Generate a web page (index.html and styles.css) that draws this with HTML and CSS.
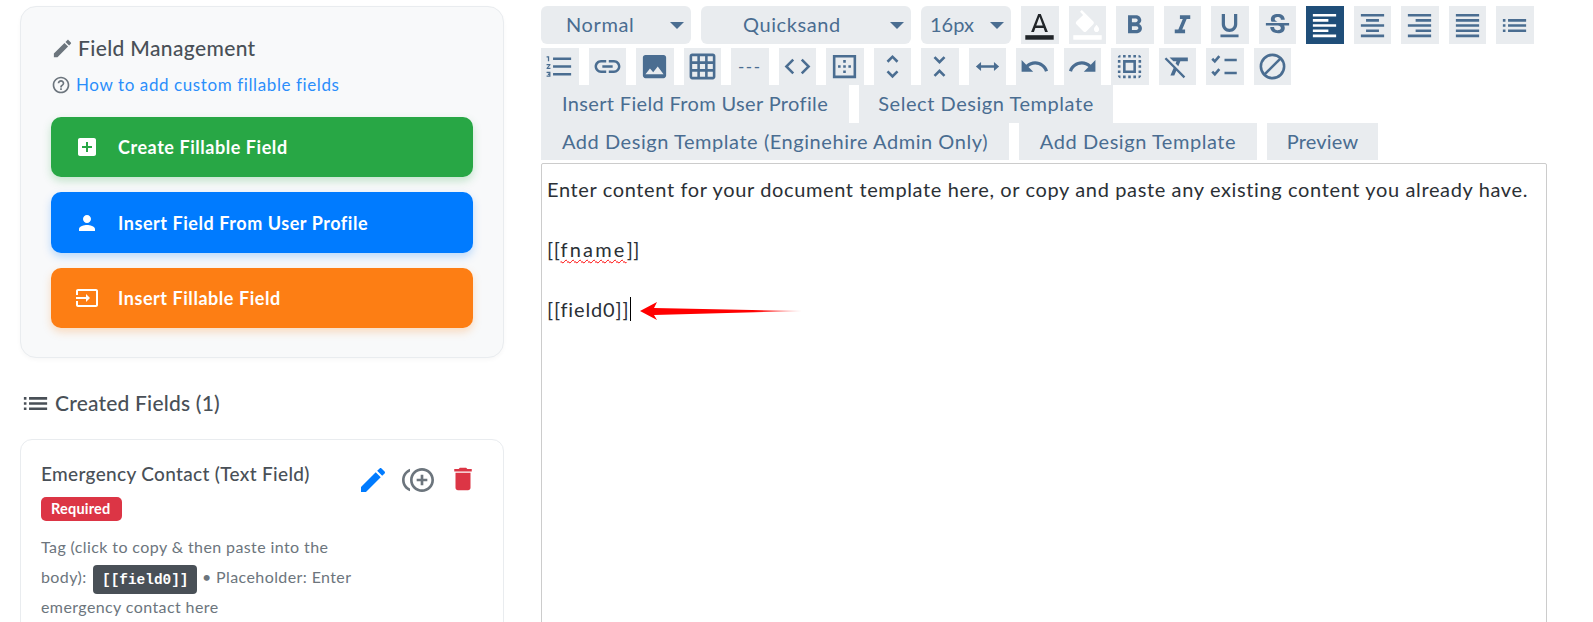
FILE: index.html
```html
<!DOCTYPE html>
<html lang="en">
<head>
<meta charset="utf-8">
<title>Document Template</title>
<link rel="stylesheet" href="styles.css">
</head>
<body>
<div class="page">
  <aside class="side">
    <section class="panel">
      <h2 class="panel-title"><svg class="ico-title" viewBox="0 0 24 24"><path d="M3 17.25V21h3.75L17.81 9.94l-3.75-3.75L3 17.25zM20.71 7.04c.39-.39.39-1.02 0-1.41l-2.34-2.34c-.39-.39-1.02-.39-1.41 0l-1.83 1.83 3.75 3.75 1.83-1.83z"/></svg>Field Management</h2>
      <p class="help"><svg class="ico-help" viewBox="0 0 24 24"><path d="M11 18h2v-2h-2v2zm1-16C6.48 2 2 6.48 2 12s4.48 10 10 10 10-4.48 10-10S17.52 2 12 2zm0 18c-4.41 0-8-3.59-8-8s3.59-8 8-8 8 3.59 8 8-3.59 8-8 8zm0-14c-2.21 0-4 1.79-4 4h2c0-1.1.9-2 2-2s2 .9 2 2c0 2-3 1.75-3 5h2c0-2.25 3-2.5 3-5 0-2.21-1.79-4-4-4z"/></svg><a href="#">How to add custom fillable fields</a></p>
      <div class="actions">
        <a class="action green" href="#"><svg viewBox="0 0 24 24"><path d="M19 3H5c-1.11 0-2 .9-2 2v14c0 1.1.89 2 2 2h14c1.1 0 2-.9 2-2V5c0-1.1-.9-2-2-2zm-2 10h-4v4h-2v-4H7v-2h4V7h2v4h4v2z"/></svg>Create Fillable Field</a>
        <a class="action blue" href="#"><svg viewBox="0 0 24 24"><path d="M12 12c2.21 0 4-1.79 4-4s-1.79-4-4-4-4 1.79-4 4 1.79 4 4 4zm0 2c-2.67 0-8 1.34-8 4v2h16v-2c0-2.66-5.33-4-8-4z"/></svg>Insert Field From User Profile</a>
        <a class="action orange" href="#"><svg viewBox="0 0 24 24"><path d="M21 3.01H3c-1.1 0-2 .9-2 2V9h2V4.99h18v14.03H3V15H1v4.01c0 1.1.9 1.98 2 1.98h18c1.1 0 2-.88 2-1.98v-14c0-1.11-.9-2-2-2zM11 16l4-4-4-4v3H1v2h10v3z"/></svg>Insert Fillable Field</a>
      </div>
    </section>
    <h3 class="list-title"><svg viewBox="0 0 24 24"><path d="M3 13h2v-2H3v2zm0 4h2v-2H3v2zm0-8h2V7H3v2zm4 4h14v-2H7v2zm0 4h14v-2H7v2zM7 7v2h14V7H7z"/></svg>Created Fields (1)</h3>
    <article class="field-card">
      <div class="field-main">
        <h4 class="field-name">Emergency Contact (Text Field)</h4>
        <span class="badge">Required</span>
        <p class="field-desc">Tag (click to copy &amp; then paste into the body): <code class="tag">[[field0]]</code> • Placeholder: Enter emergency contact here</p>
      </div>
      <div class="field-tools">
        <svg class="t-edit" viewBox="0 0 24 24"><path d="M3 17.25V21h3.75L17.81 9.94l-3.75-3.75L3 17.25zM20.71 7.04c.39-.39.39-1.02 0-1.41l-2.34-2.34c-.39-.39-1.02-.39-1.41 0l-1.83 1.83 3.75 3.75 1.83-1.83z"/></svg>
        <svg class="t-dup" viewBox="0 0 24 24"><path d="M16 8h-2v3h-3v2h3v3h2v-3h3v-2h-3zM2 12c0-2.79 1.64-5.2 4.01-6.32V3.52C2.52 4.76 0 8.09 0 12s2.52 7.24 6.01 8.48v-2.16C3.64 17.2 2 14.79 2 12zm13-9c-4.96 0-9 4.04-9 9s4.04 9 9 9 9-4.04 9-9-4.04-9-9-9zm0 16c-3.86 0-7-3.14-7-7s3.14-7 7-7 7 3.14 7 7-3.14 7-7 7z"/></svg>
        <svg class="t-del" viewBox="0 0 24 24"><path d="M6 19c0 1.1.9 2 2 2h8c1.1 0 2-.9 2-2V7H6v12zM19 4h-3.5l-1-1h-5l-1 1H5v2h14V4z"/></svg>
      </div>
    </article>
  </aside>

  <main class="editor-wrap">
    <div class="toolbar">
      <div class="row row-a">
        <div class="pick w-normal"><span>Normal</span><i class="caret"></i></div>
        <div class="pick w-font"><span>Quicksand</span><i class="caret"></i></div>
        <div class="pick w-size"><span>16px</span><i class="caret"></i></div>
        <button class="b"><svg viewBox="0 0 24 24"><path class="dark" d="M11 3 5.500 17h2.200l1.100-3h6.400l1.100 3h2.200L13 3h-2zm-1.500 9L12 5.200 14.500 12h-5z"/><rect class="dark" x="1" y="19.500" width="22" height="3.500"/></svg></button>
        <button class="b"><svg viewBox="0 0 24 24"><path class="white" d="M7.600 0 6.200 1.400l2.400 2.400-5.200 5.100c-.6.6-.6 1.600 0 2.200l5.500 5.500c.6.600 1.500.6 2.100 0l5.500-5.500c.6-.6.6-1.500 0-2.100L7.600 0zM19 11.500s-2 2.200-2 3.500c0 1.100.9 2 2 2s2-.9 2-2c0-1.300-2-3.500-2-3.500z"/><rect class="white" x="1" y="19.500" width="22" height="3.500"/></svg></button>
        <button class="b"><svg viewBox="0 0 24 24"><path d="M15.600 10.790c.97-.67 1.650-1.770 1.650-2.790 0-2.260-1.750-4-4-4H7v14h7.040c2.090 0 3.710-1.700 3.710-3.790 0-1.520-.86-2.820-2.150-3.420zM10 6.500h3c.83 0 1.500.67 1.500 1.500s-.67 1.500-1.500 1.500h-3v-3zm3.500 9H10v-3h3.500c.83 0 1.500.67 1.500 1.500s-.67 1.500-1.500 1.500z"/></svg></button>
        <button class="b"><svg viewBox="0 0 24 24"><path d="M10 4v3h2.210l-3.420 8H6v3h8v-3h-2.210l3.420-8H18V4z"/></svg></button>
        <button class="b"><svg viewBox="0 0 24 24"><path d="M12 17c3.310 0 6-2.690 6-6V3h-2.500v8c0 1.930-1.570 3.500-3.500 3.500S8.500 12.930 8.500 11V3H6v8c0 3.310 2.690 6 6 6zm-7 2v2h14v-2H5z"/></svg></button>
        <button class="b"><svg viewBox="0 0 24 24"><path d="M7.240 8.750c-.26-.48-.39-1.030-.39-1.670 0-.61.13-1.160.4-1.670.26-.5.63-.93 1.110-1.290.48-.35 1.050-.63 1.700-.83.66-.19 1.390-.29 2.180-.29.81 0 1.540.11 2.210.34.66.22 1.230.54 1.690.94.47.4.83.88 1.080 1.430.25.55.38 1.150.38 1.810h-3.010c0-.31-.05-.59-.15-.85-.09-.27-.24-.49-.44-.68-.2-.19-.45-.33-.75-.44-.3-.1-.66-.16-1.060-.16-.39 0-.74.04-1.030.13-.29.09-.53.21-.72.36-.19.16-.34.34-.44.55-.1.21-.15.43-.15.66 0 .48.25.88.74 1.210.38.25.77.48 1.410.7H7.390c-.05-.08-.11-.17-.15-.25zM21 12v-2H3v2h9.620c.18.07.4.14.55.2.37.17.66.34.87.51.21.17.35.36.43.57.07.2.11.43.11.69 0 .23-.05.45-.14.66-.09.2-.23.38-.42.53-.19.15-.42.26-.71.35-.29.08-.63.13-1.010.13-.43 0-.83-.04-1.180-.13s-.66-.23-.91-.42c-.25-.19-.45-.44-.59-.75-.14-.31-.25-.76-.25-1.210H6.400c0 .55.08 1.130.24 1.580.16.45.37.85.65 1.210.28.35.6.66.98.92.37.26.78.48 1.220.65.44.17.9.3 1.380.39.48.08.96.13 1.440.13.8 0 1.530-.09 2.180-.28s1.210-.45 1.670-.79c.46-.34.82-.77 1.070-1.270s.38-1.070.38-1.710c0-.6-.1-1.140-.31-1.610-.05-.11-.11-.23-.17-.33H21z"/></svg></button>
        <button class="b active"><svg viewBox="0 0 24 24"><path d="M15 15H3v2h12v-2zm0-8H3v2h12V7zM3 13h18v-2H3v2zm0 8h18v-2H3v2zM3 3v2h18V3H3z"/></svg></button>
        <button class="b"><svg viewBox="0 0 24 24"><path d="M7 15v2h10v-2H7zm-4 6h18v-2H3v2zm0-8h18v-2H3v2zm4-6v2h10V7H7zM3 3v2h18V3H3z"/></svg></button>
        <button class="b"><svg viewBox="0 0 24 24"><path d="M3 21h18v-2H3v2zm6-4h12v-2H9v2zm-6-4h18v-2H3v2zm6-4h12V7H9v2zM3 3v2h18V3H3z"/></svg></button>
        <button class="b"><svg viewBox="0 0 24 24"><path d="M3 21h18v-2H3v2zm0-4h18v-2H3v2zm0-4h18v-2H3v2zm0-4h18V7H3v2zm0-6v2h18V3H3z"/></svg></button>
        <button class="b"><svg viewBox="0 0 24 24"><path d="M3 13h2v-2H3v2zm0 4h2v-2H3v2zm0-8h2V7H3v2zm4 4h14v-2H7v2zm0 4h14v-2H7v2zM7 7v2h14V7H7z"/></svg></button>
      </div>
      <div class="row row-b">
        <button class="b"><svg viewBox="0 0 24 24"><path d="M2 17h2v.5H3v1h1v.5H2v1h3v-4H2v1zm1-9h1V4H2v1h1v3zm-1 3h1.800L2 13.100v.9h3v-1H3.200L5 10.900V10H2v1zm5-6v2h14V5H7zm0 14h14v-2H7v2zm0-6h14v-2H7v2z"/></svg></button>
        <button class="b"><svg viewBox="0 0 24 24"><path d="M3.900 12c0-1.710 1.390-3.100 3.100-3.100h4V7H7c-2.760 0-5 2.240-5 5s2.240 5 5 5h4v-1.900H7c-1.710 0-3.100-1.390-3.100-3.100zM8 13h8v-2H8v2zm9-6h-4v1.900h4c1.710 0 3.100 1.390 3.100 3.100s-1.390 3.100-3.100 3.100h-4V17h4c2.760 0 5-2.240 5-5s-2.240-5-5-5z"/></svg></button>
        <button class="b"><svg viewBox="0 0 24 24"><path d="M21 19V5c0-1.100-.9-2-2-2H5c-1.100 0-2 .9-2 2v14c0 1.100.9 2 2 2h14c1.100 0 2-.9 2-2zM8.500 13.500l2.500 3.010L14.500 12l4.500 6H5l3.500-4.500z"/></svg></button>
        <button class="b"><svg viewBox="0 0 24 24"><path d="M20 2H4c-1.100 0-2 .9-2 2v16c0 1.100.9 2 2 2h16c1.100 0 2-.9 2-2V4c0-1.100-.9-2-2-2zM8 20H4v-4h4v4zm0-6H4v-4h4v4zm0-6H4V4h4v4zm6 12h-4v-4h4v4zm0-6h-4v-4h4v4zm0-6h-4V4h4v4zm6 12h-4v-4h4v4zm0-6h-4v-4h4v4zm0-6h-4V4h4v4z"/></svg></button>
        <button class="b dashes">---</button>
        <button class="b"><svg viewBox="0 0 24 24"><path d="M9.400 16.600 4.800 12l4.600-4.600L8 6l-6 6 6 6 1.400-1.400zm5.200 0 4.600-4.600-4.600-4.600L16 6l6 6-6 6-1.400-1.400z"/></svg></button>
        <button class="b"><svg viewBox="0 0 24 24"><path d="M13 7h-2v2h2V7zm0 4h-2v2h2v-2zm4 0h-2v2h2v-2zM3 3v18h18V3H3zm16 16H5V5h14v14zm-6-4h-2v2h2v-2zm-4-4H7v2h2v-2z"/></svg></button>
        <button class="b"><svg viewBox="0 0 24 24"><path d="M12 5.830 15.170 9l1.410-1.410L12 3 7.410 7.590 8.830 9 12 5.830zm0 12.340L8.830 15l-1.410 1.410L12 21l4.590-4.590L15.170 15 12 18.170z"/></svg></button>
        <button class="b"><svg viewBox="0 0 24 24"><path d="M7.410 18.590 8.830 20 12 16.830 15.170 20l1.410-1.410L12 14l-4.590 4.590zm9.180-13.180L15.170 4 12 7.170 8.830 4 7.410 5.410 12 10l4.590-4.590z"/></svg></button>
        <button class="b"><svg viewBox="0 0 24 24"><path d="M7 8.500 3 12l4 3.500V13h10v2.500l4-3.500-4-3.500V11H7z"/></svg></button>
        <button class="b"><svg viewBox="0 0 24 24"><path d="M12.500 8c-2.650 0-5.050.99-6.900 2.600L2 7v9h9l-3.620-3.620c1.390-1.160 3.160-1.880 5.120-1.880 3.540 0 6.550 2.310 7.600 5.500l2.370-.78C21.080 11.030 17.150 8 12.500 8z"/></svg></button>
        <button class="b"><svg viewBox="0 0 24 24"><path d="M18.400 10.600C16.550 8.990 14.150 8 11.500 8c-4.650 0-8.580 3.030-9.960 7.220L3.900 16c1.050-3.190 4.050-5.500 7.600-5.500 1.950 0 3.730.72 5.120 1.880L13 16h9V7l-3.600 3.600z"/></svg></button>
        <button class="b"><svg viewBox="0 0 24 24"><path d="M3 5h2V3c-1.100 0-2 .9-2 2zm0 8h2v-2H3v2zm4 8h2v-2H7v2zM3 9h2V7H3v2zm10-6h-2v2h2V3zm6 0v2h2c0-1.100-.9-2-2-2zM5 21v-2H3c0 1.100.9 2 2 2zm-2-4h2v-2H3v2zM9 3H7v2h2V3zm2 18h2v-2h-2v2zm8-8h2v-2h-2v2zm0 8c1.100 0 2-.9 2-2h-2v2zm0-12h2V7h-2v2zm0 8h2v-2h-2v2zm-4 4h2v-2h-2v2zm0-16h2V3h-2v2zM7 17h10V7H7v10zm2-8h6v6H9V9z"/></svg></button>
        <button class="b"><svg viewBox="0 0 24 24"><path d="M3.270 5 2 6.270l6.970 6.970L6.500 19h3l1.570-3.660L16.730 21 18 19.730 3.550 5.270 3.270 5zM6 5v.18L8.820 8h2.400l-.72 1.680 2.100 2.100L14.210 8H20V5H6z"/></svg></button>
        <button class="b"><svg viewBox="0 0 24 24"><path class="line" d="M2.500 6 4.500 8 8 4M2.500 16l2 2L8 14M12 7h9.500M12 17h9.500"/></svg></button>
        <button class="b"><svg viewBox="0 0 24 24"><circle class="line" cx="12" cy="12" r="9"/><path class="line" d="M5.700 18.300 18.300 5.700"/></svg></button>
      </div>
      <div class="row row-c">
        <button class="txt w-profile">Insert Field From User Profile</button>
        <button class="txt w-select">Select Design Template</button>
      </div>
      <div class="row row-d">
        <button class="txt w-admin">Add Design Template (Enginehire Admin Only)</button>
        <button class="txt w-add">Add Design Template</button>
        <button class="txt w-preview">Preview</button>
      </div>
    </div>
    <div class="editor">
      <p>Enter content for your document template here, or copy and paste any existing content you already have.</p>
      <p><br></p>
      <p>[[<span class="misspelt">fname</span>]]</p>
      <p><br></p>
      <p><span class="cursor">[[field0]]</span></p>
      <svg class="arrow" viewBox="0 0 162 20"><defs><linearGradient id="fade"><stop offset="0" stop-color="#f00"/><stop offset=".7" stop-color="#f00"/><stop offset="1" stop-color="#f00" stop-opacity=".3"/></linearGradient></defs><polygon fill="url(#fade)" points="0,10 17,1 14,7 162,10 14,14 17,19"/></svg>
    </div>
  </main>
</div>
</body>
</html>
```

FILE: styles.css
```css
* { box-sizing: border-box; }
html, body { margin: 0; height: 622px; overflow: hidden; background: #fff; }
body { font-family: "Lato", "Open Sans", sans-serif; color: #495057; }
svg { fill: currentColor; display: block; flex: none; }

.page { display: flex; height: 622px; padding-left: 20px; overflow: hidden; }

/* Left column */
.side { width: 484px; flex: none; padding-top: 6px; }
.panel {
  background: #f8f9fa; border: 1px solid #e9ecef; border-radius: 16px;
  padding: 29px 30px; height: 352px;
  box-shadow: 0 2px 4px rgba(0,0,0,.03);
}
.panel-title { display: flex; align-items: center; margin: -1px 0 0 0; font-size: 21px; font-weight: 500; letter-spacing: .36px; line-height: 26px; color: #495057; height: 26px; }
.ico-title { width: 23px; height: 23px; margin-right: 4px; color: #6c757d; }
.help { display: flex; align-items: center; margin: 12px 0 0 0; font-size: 17px; letter-spacing: .6px; line-height: 24px; }
.help a { color: #2b8efb; text-decoration: none; }
.ico-help { width: 20px; height: 20px; margin-right: 5px; color: #6c757d; }
.actions { display: flex; flex-direction: column; gap: 15px; margin-top: 20px; }
.action {
  display: flex; align-items: center; height: 60px; border-radius: 10px; padding-left: 24px;
  color: #fff; font-size: 18px; font-weight: 700; letter-spacing: .55px; text-decoration: none;
}
.action svg { width: 24px; height: 24px; margin-right: 19px; }
.green { background: #28a745; box-shadow: 0 4px 8px rgba(40,167,69,.25); }
.blue { height: 61px; background: #007bff; box-shadow: 0 4px 8px rgba(0,123,255,.25); }
.orange { background: #fd7e14; box-shadow: 0 4px 8px rgba(253,126,20,.25); }

.list-title { display: flex; align-items: center; margin: 32px 0 0 0; font-size: 21px; font-weight: 500; letter-spacing: .2px; line-height: 26px; height: 26px; color: #495057; }
.list-title svg { width: 31px; height: 31px; margin-right: 4px; }

.field-card {
  display: flex; margin-top: 23px; height: 240px; padding: 22px 20px;
  background: #fff; border: 1px solid #e9ecef; border-radius: 12px;
}
.field-main { width: 316px; flex: none; }
.field-name { margin: 0; font-size: 19px; font-weight: 500; letter-spacing: .33px; line-height: 24px; color: #495057; }
.badge { display: block; margin-top: 11px; height: 24px; width: 81px; padding: 0 10px; background: #dc3545; color: #fff; font-size: 14.500px; font-weight: 700; line-height: 24px; border-radius: 5px; letter-spacing: .2px; }
.field-desc { margin: 11px 0 0; font-size: 16px; line-height: 30px; color: #6c757d; letter-spacing: .4px; }
.tag {
  margin-left: 2px; padding: 6.500px 9px; background: #495057; color: #fff; line-height: 1;
  font-family: "Liberation Mono", monospace; font-size: 14.400px; font-weight: 700; border-radius: 4px; letter-spacing: 0;
}
.field-tools { display: flex; align-items: flex-start; margin-top: 2px; }
.t-edit { width: 32px; height: 32px; color: #007bff; }
.t-dup { width: 32px; height: 32px; color: #6c757d; margin-left: 13px; }
.t-del { width: 30px; height: 30px; color: #dc3545; margin-left: 14px; }

/* Right column */
.editor-wrap { width: 1006px; flex: none; margin-left: 37px; padding-top: 6px; }
.row { display: flex; gap: 10px; }
.row-a { height: 38px; }
.row-b { height: 37px; margin-top: 4px; }
.row-c { height: 38px; }
.row-d { height: 37px; }
.b, .pick, .txt { background: #e9ecef; border: 0; padding: 0; color: #4a6d91; font-family: inherit; }
.b { display: flex; align-items: center; justify-content: center; width: 37.500px; height: 100%; }
.b svg { width: 31px; height: 31px; }
.active { background: #1f4e79; color: #fff; }
.dark { fill: #212529; }
.white { fill: #fff; }
.line { fill: none; stroke: currentColor; stroke-width: 2; }
.dashes { font-size: 17px; letter-spacing: 1.500px; }
.pick { position: relative; display: flex; align-items: center; height: 100%; border-radius: 6px; font-size: 20px; letter-spacing: .6px; padding-bottom: 2px; }
.w-normal { width: 150px; padding-left: 25px; }
.w-font { width: 210px; padding-left: 42px; }
.w-size { width: 90px; padding-left: 9px; letter-spacing: 0; }
.caret { position: absolute; right: 7px; top: 16px; width: 0; height: 0; border-left: 7px solid transparent; border-right: 7px solid transparent; border-top: 7px solid #4a6d91; }
.txt { font-size: 20px; letter-spacing: .55px; height: 100%; padding-bottom: 2px; text-align: center; white-space: nowrap; }
.w-profile { width: 308px; letter-spacing: .35px; } .w-select { width: 254px; } .w-admin { width: 468px; } .w-add { width: 238px; } .w-preview { width: 111px; letter-spacing: .2px; }

.editor {
  position: relative; margin-top: 3px; height: 500px; padding: 10px 5px; border: 1px solid #ccc; border-radius: 2px;
  font-size: 20px; line-height: 30px; color: #2b3035; letter-spacing: .63px;
}
.editor p { margin: 0; white-space: nowrap; }
.misspelt { letter-spacing: 2.200px; text-decoration: underline wavy #f00 1px; text-underline-offset: 2px; }
.cursor { border-right: 1px solid #000; padding-right: 1px; display: inline-block; height: 24px; line-height: 24px; letter-spacing: .85px; }
.arrow { position: absolute; left: 98px; top: 137px; width: 162px; height: 20px; }
```
